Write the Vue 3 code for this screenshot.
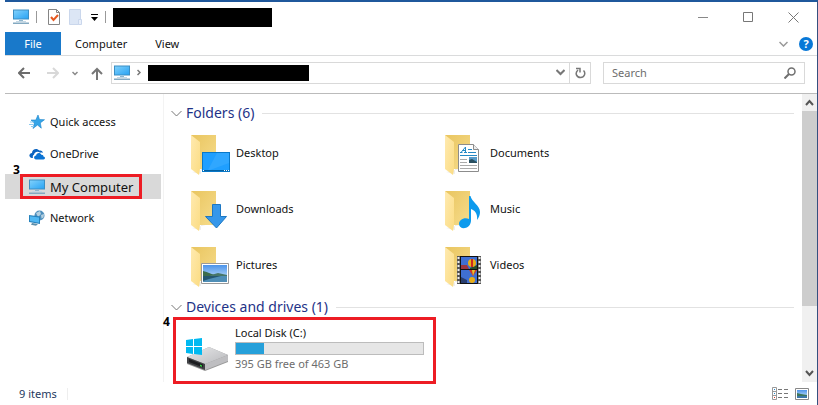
<script setup>
import { ref } from 'vue'

const search = ref('')
const tabs = ['Computer', 'View']
const places = [
  { name: 'Quick access', icon: 'star' },
  { name: 'OneDrive', icon: 'cloud' },
  { name: 'My Computer', icon: 'pc', selected: true },
  { name: 'Network', icon: 'network' },
]
const folders = [
  { name: 'Desktop', icon: 'desktop' },
  { name: 'Documents', icon: 'document' },
  { name: 'Downloads', icon: 'download' },
  { name: 'Music', icon: 'music' },
  { name: 'Pictures', icon: 'picture' },
  { name: 'Videos', icon: 'video' },
]
const drive = { name: 'Local Disk (C:)', free: 395, total: 463 }
const used = Math.round((1 - drive.free / drive.total) * 100)
</script>

<template>
  <svg class="defs" width="0" height="0" aria-hidden="true">
    <defs>
      <linearGradient id="screen" x1="0" y1="0" x2="1" y2="1">
        <stop offset="0" stop-color="#7fd0fb" /><stop offset="1" stop-color="#2aa4f4" />
      </linearGradient>
      <linearGradient id="flap" x1="0" y1="0" x2="1" y2="1">
        <stop offset="0" stop-color="#ffeab0" /><stop offset="1" stop-color="#fbdc83" />
      </linearGradient>
      <linearGradient id="back" x1="0" y1="0" x2="1" y2="1">
        <stop offset="0" stop-color="#e9c55f" /><stop offset="1" stop-color="#f6dc8c" />
      </linearGradient>
      <linearGradient id="sky" x1="0" y1="0" x2="0" y2="1">
        <stop offset="0" stop-color="#4b93ea" /><stop offset="1" stop-color="#d9effb" />
      </linearGradient>
      <linearGradient id="metal" x1="0" y1="0" x2="1" y2="1">
        <stop offset="0" stop-color="#e8e8ea" /><stop offset="1" stop-color="#b9babd" />
      </linearGradient>
      <symbol id="pc" viewBox="0 0 16 16">
        <path d="M0 .5h16v10H0z" fill="#3b8fc4" /><path d="M1 1.500h14v8H1z" fill="url(#screen)" />
        <path d="M6 11h4v1H6z" fill="#8fb5cc" /><path d="M3 12h10v1H3z" fill="#c3d7e4" />
        <path d="M0 13.500h16v1.500H0z" fill="#83a9c1" />
      </symbol>
      <symbol id="star" viewBox="0 0 16 16">
        <path d="M9 1l1.500 4.500 5 .2-4.200 3.200 1 5.300L8.500 11 4 14.500l1.300-5.300L2 6h4.800z" fill="#35a5e8" stroke="#1b83ca" stroke-width=".6" />
        <path d="M1 8h4M0 10.500h4M2 12.500h3" stroke="#8ac9f0" />
      </symbol>
      <symbol id="cloud" viewBox="0 0 16 16">
        <path d="M4 12H3C-.5 11.500-.5 7.500 3 7c0-4 5-5.500 7.300-2.400 2-.6 3.500.8 3.500 2.400-1-.6-2-.5-2.600-.3C8.700 4.500 5 6 5 8.800 3.800 9 3.500 11 4 12z" fill="#0a63c0" />
        <path d="M7 13.500c-2.600-.2-2.500-3.700.1-3.900.2-3.200 4.400-3.600 5.200-.9 1.700-.2 2.200 1 2.100 1.900 2.200.3 2 2.900 0 2.900z" fill="#0a73d4" />
      </symbol>
      <symbol id="network" viewBox="0 0 16 16">
        <circle cx="10.500" cy="5.500" r="5" fill="#4f8fbd" /><path d="M7 3l4-2 1 3-3 3zM12 5l3-1-.5 3.500-2 1z" fill="#b5d0e0" />
        <path d="M0 5l11 1.500v7.500L0 12z" fill="#2783bd" /><path d="M1 6.200l9 1.300v5.200l-9-1.600z" fill="#50b8f3" />
        <path d="M3 13l6 1-2 1.700-5-1z" fill="#5c8fab" />
      </symbol>
      <symbol id="folder" viewBox="0 0 40 42">
        <path d="M1 38l9 2V35h5z" fill="#eee" />
        <path d="M0 1h25v34H8z" fill="url(#back)" />
        <path d="M0 1l9 7v27l-1 6-8-6z" fill="url(#flap)" />
      </symbol>
      <symbol id="desktop" viewBox="0 -2 28 28">
        <path d="M0 5h28v20H0z" fill="#0878c9" /><path d="M1 6h26v17H1z" fill="#1f9fff" />
        <path d="M15 6h12v10L8 23h-2z" fill="#42afff" opacity=".5" />
        <path d="M1 23h26v1H1z" fill="#0560a0" /><path d="M1 23h1v1H1zM22 23h1v1h-1zM24 23h1v1h-1zM26 23h1v1h-1z" fill="#fff" />
      </symbol>
      <symbol id="document" viewBox="2 1 28 28" overflow="visible">
        <path d="M4.500.5h15l5 5v22h-20z" fill="#fff" stroke="#8c8c8c" /><path d="M19.500.5v5h5" fill="#eee" stroke="#8c8c8c" />
        <path d="M7 8.500L11.500 3v5.500M8.500 6.500h3M6 8.500h2.500M10 8.500h3M14 5.500h4M14 8.500h8M6 11.500h17" fill="none" stroke="#2589c5" />
        <path d="M6 15.500h7M6 18.500h7M6 21.500h17M6 24.500h17" stroke="#aaa" />
        <path d="M15 13h8v6h-8z" fill="#589bc9" /><path d="M15 16l3-1 5 3v1h-8z" fill="#294f60" />
      </symbol>
      <symbol id="download" viewBox="0 -1 28 28">
        <path d="M10.500 2.500h8v12h6L14.500 26 3.500 14.500h7z" fill="#3697ea" stroke="#1c77c3" />
      </symbol>
      <symbol id="music" viewBox="0 0 28 28" overflow="visible">
        <path d="M13-5h1.500c1 6 9.500 9 9.500 16 0 3-1 5-3 8 1-7-3-10-6-11v12c-1 9-12 9-12 3 0-4 5-7 10-5z" fill="#0c9aed" />
      </symbol>
      <symbol id="picture" viewBox="1 -1 28 28" overflow="visible">
        <path d="M.5 5.500h27v20H.5z" fill="#fff" stroke="#999" /><path d="M2 7h24v17H2z" fill="url(#sky)" />
        <path d="M2 13c5 1 9 4 17 5H2z" fill="#3d6d4c" /><path d="M10 17l7-2 9 2v2H8z" fill="#477668" />
        <path d="M2 18h24v6H2z" fill="#4f8eb6" /><path d="M2 18h18L8 21l-6 2z" fill="#255770" />
      </symbol>
      <symbol id="video" viewBox="1 1 28 28" overflow="visible">
        <path d="M2 0h24v28H2z" fill="#555" /><path d="M6 1h16v12H6zM6 14h16v13H6z" fill="#3f6fd2" />
        <path d="M6 9h6l2 4H6z" fill="#9a3540" /><path d="M15 12l7-3v4h-7z" fill="#294d28" />
        <circle cx="17" cy="7" r="4" fill="#e8ad18" /><path d="M16 3h2v8h-2z" fill="#ce2921" />
        <path d="M14 14h8l-4 6z" fill="#cf3828" /><path d="M17 14h3l-2 6z" fill="#e5c72c" />
        <circle cx="17" cy="24" r="3" fill="#e8ad18" /><path d="M6 21l6 3v3H6z" fill="#283d6f" />
        <path d="M6 .5h16M6 13.500h16M6 27.500h16M5.500 0v28M22.500 0v28" stroke="#111" />
        <path d="M3.500 1v27M24.500 1v27" stroke="#eee" stroke-width="2" stroke-dasharray="2 2" />
      </symbol>
      <symbol id="drive" viewBox="0 0 44 36">
        <path d="M1 20L23 10l19 8v7L19 34 1 27z" fill="#999" />
        <path d="M1 20L23 10l19 8-23 9z" fill="url(#metal)" /><path d="M19 27l23-9v6L19 33z" fill="#bebec1" />
        <path d="M1 20l18 7v6L1 26z" fill="#414245" /><path d="M3 22l14 5.500v3L3 25z" fill="#1c1d20" />
        <path d="M14 27.500l2 1v1.500l-2-1z" fill="#35dd45" />
        <path d="M0 3l7-1v7H0zM8 2l8-1v8H8zM0 10h7v7l-7-1zM8 10h8v8l-8-1z" fill="#00b9f1" />
      </symbol>
      <symbol id="thumb" viewBox="0 0 14 12">
        <path d="M.5.5h13v11H.5z" fill="#fff" stroke="#888" /><path d="M2 2h10v8H2z" fill="url(#sky)" />
        <path d="M2 5l4 1 6 1v1H2z" fill="#3d755b" /><path d="M2 8h10v2H2z" fill="#3a76a8" />
      </symbol>
    </defs>
  </svg>

  <div class="window">
    <header class="title-bar">
      <svg class="i16"><use href="#pc" /></svg>
      <span class="sep"></span>
      <button class="plain" aria-label="Properties">
        <svg width="12" height="16"><path d="M.5.500h8l3 3v12H.5z" fill="#fff" stroke="#858585" /><path d="M8.500.500v3h3" fill="none" stroke="#858585" /><path d="M3 8l2.500 3L10 6" fill="none" stroke="#e65a22" stroke-width="2" /></svg>
      </button>
      <button class="plain" aria-label="New folder">
        <svg width="13" height="16"><path d="M.5.500h11v15H.5z" fill="#dce6f5" stroke="#cad7ec" /><path d="M9.500 10.500h3v5h-3z" fill="#e9effa" stroke="#cad7ec" /></svg>
      </button>
      <button class="plain" aria-label="Customize toolbar">
        <svg width="7" height="7"><path d="M0 .5h7" stroke="#000" /><path d="M0 3h7L3.500 7z" /></svg>
      </button>
      <span class="sep"></span>
      <span class="redacted title"></span>
      <div class="controls">
        <button class="plain" aria-label="Minimize"><svg width="11" height="11"><path d="M0 5.500h10" stroke="#888" /></svg></button>
        <button class="plain" aria-label="Maximize"><svg width="11" height="11"><path d="M.5.500h9v9h-9z" fill="none" stroke="#777" /></svg></button>
        <button class="plain" aria-label="Close"><svg width="11" height="11"><path d="M.5.500l10 10M10.500.500l-10 10" stroke="#777" /></svg></button>
      </div>
    </header>

    <nav class="ribbon">
      <button class="tab file">File</button>
      <button v-for="t in tabs" :key="t" class="tab">{{ t }}</button>
      <div class="ribbon-end">
        <button class="plain" aria-label="Expand ribbon"><svg width="9" height="6"><path d="M.5 1l4 4 4-4" fill="none" stroke="#999" stroke-width="1.500" /></svg></button>
        <button class="help" aria-label="Help">?</button>
      </div>
    </nav>

    <div class="address-row">
      <div class="arrows">
        <button class="plain" aria-label="Back"><svg width="12" height="12"><path d="M12 6H1M6 1L1 6l5 5" fill="none" stroke="#6c6c6c" stroke-width="2" /></svg></button>
        <button class="plain" aria-label="Forward"><svg width="12" height="12"><path d="M0 6h11M6 1l5 5-5 5" fill="none" stroke="#d8d8d8" stroke-width="2" /></svg></button>
        <button class="plain" aria-label="Recent"><svg width="6" height="5"><path d="M.5 1L3 3.500 5.500 1" fill="none" stroke="#888" stroke-width="1.500" /></svg></button>
        <button class="plain" aria-label="Up"><svg width="12" height="13"><path d="M6 13V2M1 7l5-5 5 5" fill="none" stroke="#777" stroke-width="2" /></svg></button>
      </div>
      <div class="address">
        <svg class="i16"><use href="#pc" /></svg>
        <svg width="4" height="7"><path d="M.5 1L3 3.500.5 6" fill="none" stroke="#777" stroke-width="1.500" /></svg>
        <span class="redacted path"></span>
        <button class="plain drop" aria-label="Previous locations"><svg width="9" height="7"><path d="M.5 1l4 4 4-4" fill="none" stroke="#777" stroke-width="2" /></svg></button>
        <button class="plain refresh" aria-label="Refresh"><svg width="11" height="12"><path d="M3 3C-.5 6 1.500 10.500 5.500 10.500c4 0 5.500-4.500 3-7M1 1.500h4v4" fill="none" stroke="#777" stroke-width="1.500" /></svg></button>
      </div>
      <label class="search">
        <input v-model="search" type="text" placeholder="Search" aria-label="Search">
        <svg width="12" height="12"><circle cx="7.500" cy="4.500" r="3.500" fill="none" stroke="#707070" stroke-width="1.500" /><path d="M5 7l-4.500 4.500" stroke="#707070" stroke-width="2" /></svg>
      </label>
    </div>

    <div class="body">
      <aside class="sidebar">
        <span class="mark three">3</span>
        <button v-for="p in places" :key="p.name" class="place" :class="{ selected: p.selected }">
          <span class="place-in"><svg class="i16"><use :href="'#' + p.icon" /></svg>{{ p.name }}</span>
        </button>
      </aside>

      <main class="content">
        <h2><svg width="11" height="7"><path d="M.5 1l5 5 5-5" fill="none" stroke="#777" /></svg>Folders (6)</h2>
        <div class="folders">
          <button v-for="f in folders" :key="f.name" class="folder">
            <span class="folder-icon">
              <svg class="base"><use href="#folder" /></svg>
              <svg class="badge"><use :href="'#' + f.icon" /></svg>
            </span>
            <span>{{ f.name }}</span>
          </button>
        </div>
        <h2><svg width="11" height="7"><path d="M.5 1l5 5 5-5" fill="none" stroke="#777" /></svg>Devices and drives (1)</h2>
        <div class="drive-wrap">
          <span class="mark four">4</span>
          <button class="drive">
            <svg class="drive-icon"><use href="#drive" /></svg>
            <span class="drive-info">
              <span>{{ drive.name }}</span>
              <span class="bar"><span class="fill" :style="{ width: used + '%' }"></span></span>
              <span class="free">{{ drive.free }} GB free of {{ drive.total }} GB</span>
            </span>
          </button>
        </div>
      </main>

      <div class="scrollbar">
        <button class="plain" aria-label="Scroll up"><svg width="9" height="7"><path d="M1 6l3.500-4L8 6" fill="none" stroke="#555" stroke-width="2" /></svg></button>
        <span class="scroll-thumb"></span>
        <span class="track"></span>
        <button class="plain" aria-label="Scroll down"><svg width="9" height="7"><path d="M1 1l3.500 4L8 1" fill="none" stroke="#555" stroke-width="2" /></svg></button>
      </div>
    </div>

    <footer class="status">
      <span class="count">9 items</span>
      <div class="views">
        <button class="plain" aria-label="Details view"><svg width="17" height="13"><path d="M.5.500h4v12h-4zM.5 4.500h4M.5 8.500h4" fill="#fff" stroke="#999" /><path d="M2 2h1v1H2zM2 6h1v1H2z" fill="#258bd0" /><path d="M2 10h1v1H2z" fill="#d32" /><path d="M6 2.500h4M12 2.500h4M6 6.500h4M12 6.500h4M6 10.500h4M12 10.500h4" stroke="#777" /></svg></button>
        <button class="plain" aria-label="Thumbnail view"><svg width="14" height="12"><use href="#thumb" /></svg></button>
      </div>
    </footer>
  </div>
</template>

<style>
body { margin: 0; background: #fff; }
</style>

<style scoped>
* { box-sizing: border-box; }
svg { display: block; flex: none; }
.defs { position: absolute; }
button { font: inherit; color: inherit; background: none; border: 0; padding: 0; margin: 0; }
.plain { display: flex; align-items: center; justify-content: center; }
.i16 { width: 16px; height: 16px; }
.window {
  margin-left: 5px;
  border-top: 2px solid #1f589c;
  border-right: 1px solid #35507f;
  font: 11px/16px "Noto Sans", "Open Sans", sans-serif;
  color: #111;
}
.title-bar { display: flex; align-items: center; height: 30px; padding: 0 18px 0 8px; gap: 7px; }
.sep { width: 1px; height: 12px; background: #999; }
.title-bar .sep + .plain { margin-left: 4px; }
.title-bar .plain + .plain { margin-left: 2px; }
.redacted { background: #000; flex: none; }
.title { width: 159px; height: 19px; margin-top: 1px; }
.controls { display: flex; align-items: center; gap: 32px; margin-left: auto; }
.ribbon { display: flex; height: 24px; border-bottom: 1px solid #dadbdc; }
.tab { padding: 0 14px; }
.file { background: #1979ca; color: #fff; width: 56px; }
.ribbon-end { display: flex; align-items: center; gap: 11px; margin-left: auto; padding-right: 4px; }
.help { width: 14px; height: 14px; border-radius: 50%; background: #0878d7; color: #fff; font-weight: 700; line-height: 14px; }
.address-row { display: flex; align-items: center; height: 38px; padding: 0 12px 4px 13px; border-bottom: 1px solid #bbb; }
.arrows { display: flex; align-items: center; gap: 13px; width: 93px; padding-top: 1px; }
.arrows .plain:first-child { margin-right: 4px; }
.address { display: flex; align-items: center; flex: 1; height: 22px; border: 1px solid #d9d9d9; padding-left: 2px; gap: 7px; }
.path { width: 161px; height: 16px; }
.drop { margin-left: auto; width: 12px; height: 20px; }
.refresh { width: 21px; height: 20px; border-left: 1px solid #d9d9d9; margin-left: -4px; }
.search { display: flex; align-items: center; width: 202px; height: 22px; margin-left: 12px; padding: 0 8px; border: 1px solid #d9d9d9; }
.search input { flex: 1; min-width: 0; border: 0; outline: 0; padding: 0; font: inherit; background: none; }
.search input::placeholder { color: #6d6d6d; opacity: 1; }
.body { display: flex; }
.sidebar { position: relative; width: 159px; flex: none; padding: 12px 2px 0 0; border-right: 1px solid #f3f3f3; }
.place { display: flex; align-items: center; width: 100%; height: 32px; padding-left: 15px; }
.place-in { display: flex; align-items: center; gap: 5px; height: 25px; padding: 0 6px; border: 3px solid transparent; }
.place.selected { height: 25px; margin: 4px 0 3px; background: #d9d9d9; font-size: 13px; }
.selected .place-in { border-color: #ed1c24; }
.mark { position: absolute; font: 700 12px/14px "Noto Sans", sans-serif; color: #000; }
.three { left: 8px; top: 69px; }
.content { flex: 1; min-width: 0; padding: 9px 8px 0 7px; }
h2 { display: flex; align-items: center; gap: 4px; margin: 0; font-size: 14px; line-height: 20px; font-weight: 400; color: #1e3287; }
h2::after { content: ""; flex: 1; height: 1px; margin-left: 4px; background: #e2e2e2; }
.folders { display: grid; grid-template-columns: 254px 254px; padding: 4px 0 2px 20px; }
.folder { display: flex; align-items: center; gap: 6px; height: 56px; text-align: left; }
.folder span + span { margin-bottom: 4px; }
.folder-icon { position: relative; width: 39px; height: 42px; }
.base { width: 40px; height: 42px; }
.badge { position: absolute; left: 11px; top: 11px; width: 28px; height: 28px; overflow: visible; }
.drive-wrap { position: relative; padding-left: 2px; margin-bottom: -2px; }
.four { left: -8px; top: -2px; }
.drive { display: flex; width: 263px; height: 67px; padding: 5px 9px 0 10px; border: 3px solid #ed1c24; text-align: left; }
.drive-icon { width: 44px; height: 36px; margin: 12px 5px 0 0; }
.drive-info { display: flex; flex-direction: column; flex: 1; }
.bar { display: block; height: 13px; margin: 1px 0; border: 1px solid #bcbcbc; background: #e6e6e6; }
.fill { display: block; height: 100%; background: #26a0da; }
.free { color: #6d6d6d; }
.scrollbar { display: flex; flex-direction: column; width: 15px; background: #f0f0f0; }
.scrollbar .plain { height: 17px; }
.scroll-thumb { flex: 195; background: #cdcdcd; }
.track { flex: 59; }
.status { display: flex; align-items: center; height: 23px; padding: 0 8px 0 14px; color: #1e3960; }
.count { padding-right: 10px; border-right: 1px solid #eee; line-height: 12px; }
.views { display: flex; align-items: center; gap: 6px; margin-left: auto; }
</style>
